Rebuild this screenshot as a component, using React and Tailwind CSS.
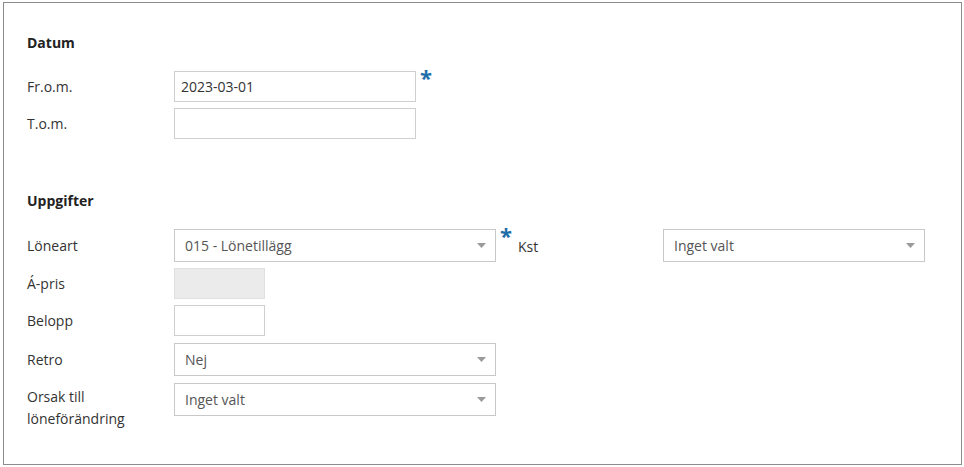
import React from 'react';

function Caret() {
  return (
    <svg width="9" height="5" viewBox="0 0 9 5" className="shrink-0">
      <path d="M0 0h9L4.5 5z" fill="#9a9a9a" />
    </svg>);
}

function Select({ value, className = '' }) {
  return (
    <div className={`h-[33px] border border-[#c8c8c8] bg-white flex items-center justify-between pl-[10px] pr-[9px] text-[#555] ${className}`}>
      <span>{value}</span>
      <Caret />
    </div>);
}

function TextInput({ value = '', className = '', disabled = false }) {
  return (
    <div
      className={`h-[31px] border flex items-center pl-[6px] text-[#333] ${
      disabled ? 'bg-[#ebebeb] border-[#e0e0e0]' : 'bg-white border-[#cfcfcf]'} ${className}`}>
      {value}
    </div>);
}

function Required() {
  return <span className="ml-[4px] -mt-[5px] self-start text-[22px] font-bold leading-none text-[#1d6ea8]">*</span>;
}

function Row({ label, children, className = '' }) {
  return (
    <div className={`flex items-center ${className}`}>
      <div className="w-[147px] shrink-0">{label}</div>
      {children}
    </div>);
}

export default function App() {
  return (
    <div className="w-[964px] h-[467px] bg-white pl-[3px] pt-[2px]" style={{ fontFamily: '"Open Sans", sans-serif' }}>
      <div className="w-[959px] h-[463px] border border-[#8c8c8c] pl-[23px] text-[14px] text-[#333]">
        <h2 className="mt-[30px] font-bold leading-[19px] text-[#222]">Datum</h2>

        <Row label="Fr.o.m." className="mt-[19px]">
          <TextInput value="2023-03-01" className="w-[242px]" />
          <Required />
        </Row>
        <Row label="T.o.m." className="mt-[6px]">
          <TextInput className="w-[242px]" />
        </Row>

        <h2 className="mt-[52px] font-bold leading-[19px] text-[#222]">Uppgifter</h2>

        <Row label="Löneart" className="mt-[19px]">
          <Select value="015 - Lönetillägg" className="w-[322px]" />
          <Required />
          <div className="w-[151px] pl-[6px] pt-[2px]">Kst</div>
          <Select value="Inget valt" className="w-[262px]" />
        </Row>
        <Row label="Á-pris" className="mt-[6px]">
          <TextInput disabled className="w-[91px]" />
        </Row>
        <Row label="Belopp" className="mt-[6px]">
          <TextInput className="w-[91px]" />
        </Row>
        <Row label="Retro" className="mt-[7px]">
          <Select value="Nej" className="w-[322px]" />
        </Row>
        <div className="mt-[7px] flex items-start">
          <div className="w-[147px] shrink-0 pt-[3px] leading-[22px]">
            Orsak till
            <br />
            löneförändring
          </div>
          <Select value="Inget valt" className="w-[322px]" />
        </div>
      </div>
    </div>);
}
